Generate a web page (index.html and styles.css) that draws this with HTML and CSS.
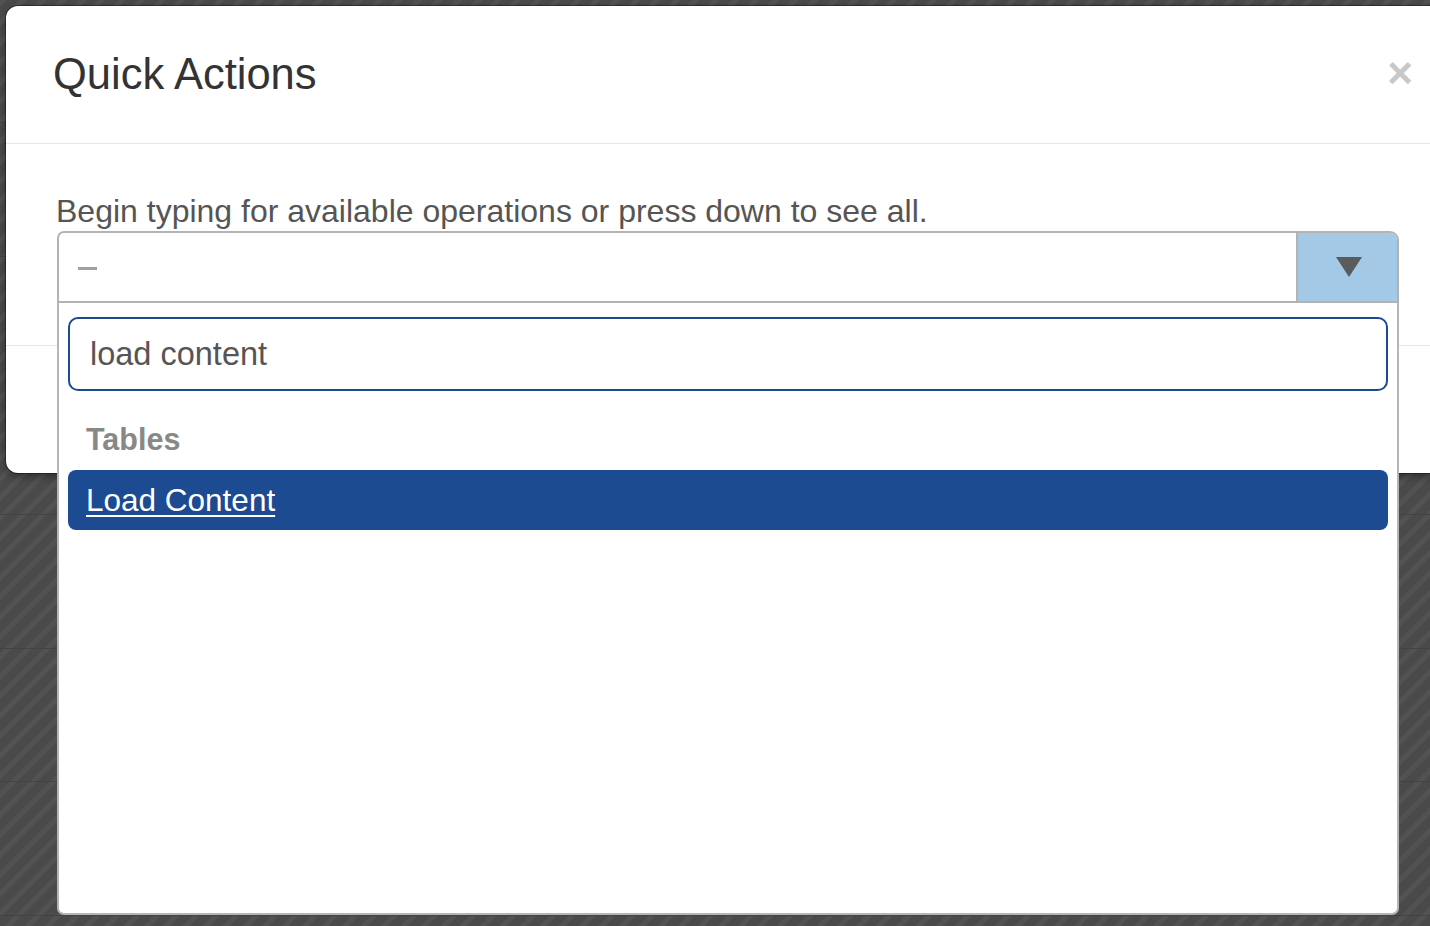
FILE: index.html
```html
<!DOCTYPE html>
<html lang="en">
<head>
<meta charset="utf-8">
<title>Quick Actions</title>
<link rel="stylesheet" href="styles.css">
</head>
<body>
<div class="backdrop">
  <div class="modal">
    <div class="modal-header">
      <h2 class="modal-title">Quick Actions</h2>
      <span class="close">&times;</span>
    </div>
    <div class="modal-body">
      <label class="field-label">Begin typing for available operations or press down to see all.</label>
      <div class="select">
        <div class="select-box">
          <span class="placeholder"></span>
          <span class="select-btn">
            <svg width="26" height="20" viewBox="0 0 26 20"><path d="M0 0 H26 L13 20 Z" fill="#5b5b5b"/></svg>
          </span>
        </div>
        <div class="dropdown">
          <div class="search"><span class="search-text">load content</span></div>
          <div class="group-label">Tables</div>
          <div class="option"><a class="option-link">Load Content</a></div>
        </div>
      </div>
    </div>
    <div class="modal-footer"></div>
  </div>
</div>
</body>
</html>
```
FILE: styles.css
```css
* { box-sizing: border-box; }
html, body { margin: 0; height: 926px; overflow: hidden; }
body {
  font-family: "Liberation Sans", Arial, sans-serif;
  background-color: #4a4a4a;
  background-image:
    repeating-linear-gradient(180deg, transparent 0, transparent 132.5px, #434343 132.5px, #434343 133.5px),
    repeating-linear-gradient(-45deg, #4a4a4a 0, #4a4a4a 9px, #525252 9px, #525252 14px);
  background-position: 0 382px, 0 0;
}
.backdrop { padding: 6px 0 0 6px; }
.modal {
  width: 1440px;
  background: #fff;
  border-radius: 12px;
  box-shadow: 0 0 0 1px rgba(0,0,0,0.35), 0 3px 8px rgba(0,0,0,0.4);
}
.modal-header {
  height: 138px;
  border-bottom: 1px solid #e5e5e5;
  display: flex;
  align-items: center;
  justify-content: space-between;
  padding: 0 33px 0 47px;
}
.modal-title {
  margin: -2px 0 0 0;
  font-weight: normal;
  font-size: 43.5px;
  color: #333;
  line-height: 50px;
}
.close {
  font-size: 44px;
  font-weight: bold;
  color: #c8c8c8;
  line-height: 40px;
  margin-top: -4px;
}
.modal-body {
  padding: 50px 47px 42px 51px;
}
.field-label {
  display: block;
  font-size: 32px;
  line-height: 34px;
  color: #555;
  margin-left: -1px;
  margin-bottom: 3px;
}
.select { position: relative; }
.select-box {
  height: 72px;
  border: 2px solid #b3b3b3;
  border-radius: 7px 9px 0 0;
  display: flex;
  align-items: stretch;
  overflow: hidden;
}
.placeholder {
  flex: 1;
  position: relative;
}
.placeholder::before {
  content: "";
  position: absolute;
  left: 19px;
  top: 34px;
  width: 19px;
  height: 3px;
  background: #a0a0a0;
}
.select-btn {
  width: 101px;
  border-left: 2px solid #b3b3b3;
  background: #a4c9e7;
  display: flex;
  align-items: center;
  justify-content: center;
}
.select-btn svg { margin-top: -1px; margin-left: 2px; }
.dropdown {
  position: absolute;
  top: 100%;
  left: 0;
  right: 0;
  height: 612px;
  background: #fff;
  border: 2px solid #b5b5b5;
  border-top: none;
  border-radius: 0 0 7px 7px;
  padding: 14px 9px 0 9px;
  z-index: 2;
}
.search {
  height: 74px;
  border: 2px solid #1d4a8e;
  border-radius: 10px;
  padding: 0 20px;
  display: flex;
  align-items: center;
}
.search-text {
  font-size: 32.5px;
  color: #555;
}
.group-label {
  font-weight: bold;
  font-size: 30.5px;
  color: #888;
  line-height: 36px;
  padding: 30px 18px 13px;
}
.option {
  height: 60px;
  background: #1c4b91;
  border-radius: 8px;
  padding: 0 18px;
  display: flex;
  align-items: center;
}
.option-link {
  color: #fff;
  font-size: 31.5px;
  text-decoration: underline;
  text-decoration-thickness: 2px;
  text-underline-offset: 4px;
}
.modal-footer {
  height: 128px;
  border-top: 1px solid #e5e5e5;
}
```
